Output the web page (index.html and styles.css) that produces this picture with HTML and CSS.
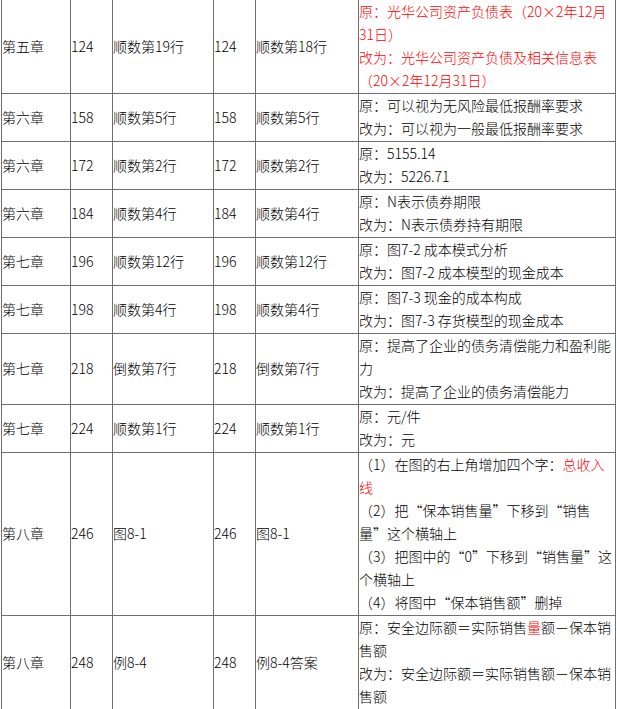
FILE: index.html
```html
<!DOCTYPE html>
<html lang="zh-CN">
<head>
<meta charset="utf-8">
<title>勘误表</title>
<link rel="stylesheet" href="styles.css">
</head>
<body>
<table class="errata">
  <colgroup>
    <col class="c1"><col class="c2"><col class="c3"><col class="c4"><col class="c5"><col class="c6">
  </colgroup>
  <tbody>
    <tr class="r4">
      <td>第五章</td><td>124</td><td>顺数第19行</td><td>124</td><td>顺数第18行</td>
      <td class="red">原：光华公司资产负债表（20<span class="wide">×</span>2年12月<br>31日）<br>改为：光华公司资产负债及相关信息表<br>（20<span class="wide">×</span>2年12月31日）</td>
    </tr>
    <tr>
      <td>第六章</td><td>158</td><td>顺数第5行</td><td>158</td><td>顺数第5行</td>
      <td>原：可以视为无风险最低报酬率要求<br>改为：可以视为一般最低报酬率要求</td>
    </tr>
    <tr>
      <td>第六章</td><td>172</td><td>顺数第2行</td><td>172</td><td>顺数第2行</td>
      <td>原：5155.14<br>改为：5226.71</td>
    </tr>
    <tr>
      <td>第六章</td><td>184</td><td>顺数第4行</td><td>184</td><td>顺数第4行</td>
      <td>原：N表示债券期限<br>改为：N表示债券持有期限</td>
    </tr>
    <tr>
      <td>第七章</td><td>196</td><td>顺数第12行</td><td>196</td><td>顺数第12行</td>
      <td>原：图7-2 成本模式分析<br>改为：图7-2 成本模型的现金成本</td>
    </tr>
    <tr>
      <td>第七章</td><td>198</td><td>顺数第4行</td><td>198</td><td>顺数第4行</td>
      <td>原：图7-3 现金的成本构成<br>改为：图7-3 存货模型的现金成本</td>
    </tr>
    <tr>
      <td>第七章</td><td>218</td><td>倒数第7行</td><td>218</td><td>倒数第7行</td>
      <td>原：提高了企业的债务清偿能力和盈利能<br>力<br>改为：提高了企业的债务清偿能力</td>
    </tr>
    <tr>
      <td>第七章</td><td>224</td><td>顺数第1行</td><td>224</td><td>顺数第1行</td>
      <td>原：元/件<br>改为：元</td>
    </tr>
    <tr>
      <td>第八章</td><td>246</td><td>图8-1</td><td>246</td><td>图8-1</td>
      <td>（1）在图的右上角增加四个字：<span class="red">总收入<br>线</span><br>（2）把“保本销售量”下移到“销售<br>量”这个横轴上<br>（3）把图中的“0”下移到“销售量”这<br>个横轴上<br>（4）将图中“保本销售额”删掉</td>
    </tr>
    <tr>
      <td>第八章</td><td>248</td><td>例8-4</td><td>248</td><td>例8-4答案</td>
      <td>原：安全边际额＝实际销售<span class="red">量</span>额－保本销<br>售额<br>改为：安全边际额＝实际销售额－保本销<br>售额</td>
    </tr>
  </tbody>
</table>
</body>
</html>
```

FILE: styles.css
```css
html, body {
  margin: 0;
  padding: 0;
  background: #ffffff;
}

body {
  font-family: "Noto Sans CJK SC", "Noto Sans", sans-serif;
  font-size: 14px;
  font-weight: 300;
  color: #000000;
}

.errata {
  margin: 0 0 0 1px;
  border-collapse: separate;
  border-spacing: 0;
  table-layout: fixed;
  width: 615px;
  border-left: 1px solid #6f6f6f;
}

.errata .c1 { width: 69px; }
.errata .c2 { width: 42px; }
.errata .c3 { width: 101px; }
.errata .c4 { width: 42px; }
.errata .c5 { width: 103px; }
.errata .c6 { width: 257px; }

.errata td {
  padding: 0 0 1px 0;
  border-right: 1px solid #6f6f6f;
  border-bottom: 1px solid #6f6f6f;
  vertical-align: middle;
  text-align: left;
  line-height: 23px;
  white-space: nowrap;
  overflow: hidden;
}

.wide {
  display: inline-block;
  width: 14px;
  text-align: center;
}

.red {
  color: #ff0000;
}
```
